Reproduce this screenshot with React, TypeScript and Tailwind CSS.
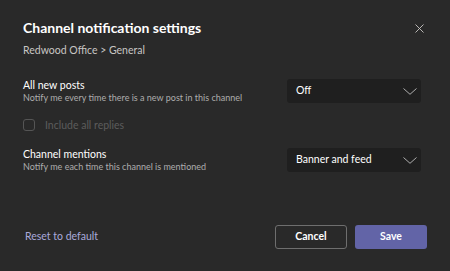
function Chevron() {
  return (
    <svg width="14" height="7" viewBox="0 0 14 7" fill="none" stroke="#bdbdbd" strokeWidth="0.9">
      <polyline points="0.5,0.5 7,6.3 13.5,0.5" />
    </svg>
  )
}

function Select({ value }: { value: string }) {
  return (
    <div className="w-[134px] h-[24px] bg-[#1f1f1f] rounded-[3px] flex items-center justify-between pl-[9px] pr-[4px] text-[10.5px] text-white">
      <span>{value}</span>
      <Chevron />
    </div>
  )
}

function SettingRow({ title, desc, value }: { title: string; desc: string; value: string }) {
  return (
    <div className="flex items-center justify-between">
      <div className="flex flex-col">
        <span className="text-[10.5px] leading-[14px] text-white">{title}</span>
        <span className="text-[9px] leading-[12px] text-[#adadad]">{desc}</span>
      </div>
      <Select value={value} />
    </div>
  )
}

export default function App() {
  return (
    <div
      className="w-[450px] h-[271px] bg-[#292929] flex flex-col pl-[23px] pr-[29px] pt-[18px] pb-[22px]"
      style={{ fontFamily: 'Lato, "Noto Sans", sans-serif' }}
    >
      <div className="flex items-start justify-between">
        <h1 className="text-[14px] leading-[20px] font-bold text-white">Channel notification settings</h1>
        <svg className="mt-[6px] -mr-[3px]" width="9" height="9" viewBox="0 0 9 9" stroke="#c8c6c4" strokeWidth="0.9">
          <path d="M0.5 0.5 L8.5 8.5 M8.5 0.5 L0.5 8.5" />
        </svg>
      </div>
      <div className="mt-[5px] text-[10.5px] leading-[14px] text-[#c8c6c4]">Redwood Office &gt; General</div>

      <div className="mt-[21px]">
        <SettingRow
          title="All new posts"
          desc="Notify me every time there is a new post in this channel"
          value="Off"
        />
      </div>

      <label className="mt-[14px] flex items-center gap-[10px] text-[10.5px] leading-[14px] text-[#5c5c5c]">
        <span className="w-[12px] h-[12px] border border-[#555] rounded-[3px]" />
        Include all replies
      </label>

      <div className="mt-[15px]">
        <SettingRow
          title="Channel mentions"
          desc="Notify me each time this channel is mentioned"
          value="Banner and feed"
        />
      </div>

      <div className="mt-auto flex items-center justify-between">
        <button className="ml-[2px] text-[10.5px] text-[#a9a9dc]">Reset to default</button>
        <div className="flex gap-[8px] -mr-[6px]">
          <button className="w-[72px] h-[24px] border border-[#6e6e6e] rounded-[3px] text-[10.5px] font-bold text-white">
            Cancel
          </button>
          <button className="w-[72px] h-[24px] bg-[#6264a7] rounded-[3px] text-[10.5px] font-bold text-white">
            Save
          </button>
        </div>
      </div>
    </div>
  )
}
